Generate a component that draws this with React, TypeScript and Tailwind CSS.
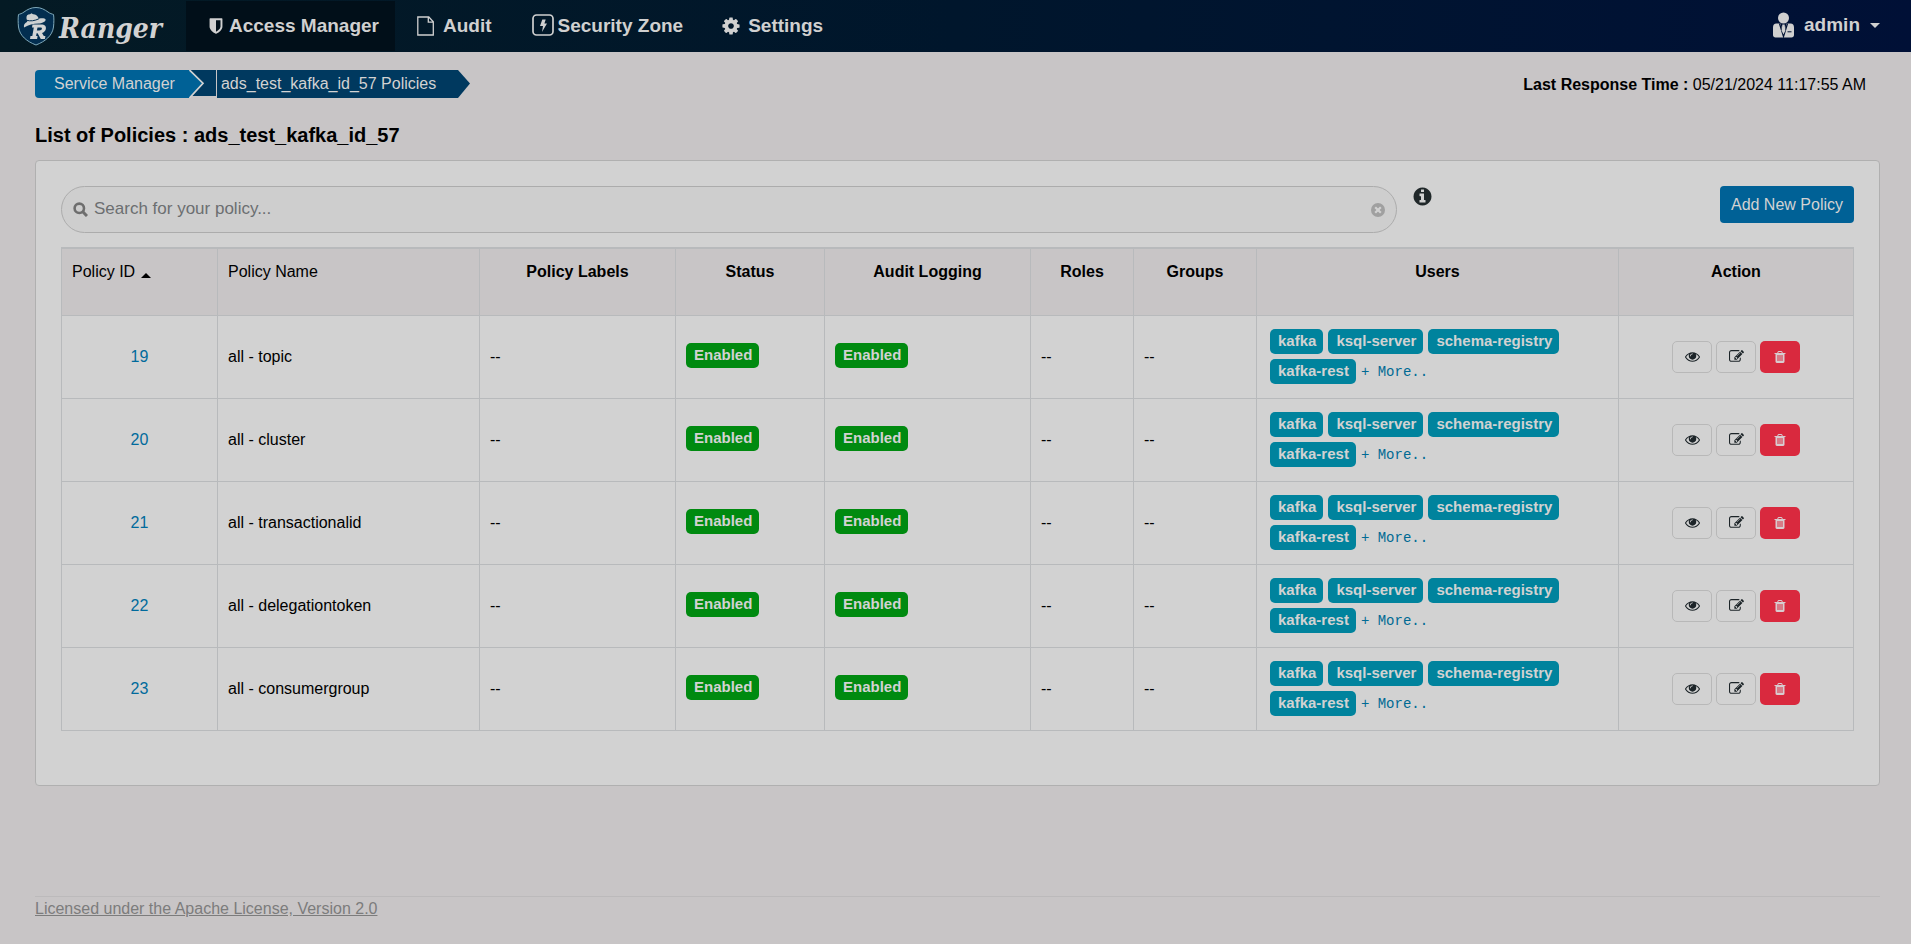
import React from "react";

const PATHS = {
  shield:
    "M1344 960V320H896v1137q119-63 213-137 235-184 235-360zm192-768v768q0 86-33.5 170.5t-83 150-118 127.5-126.5 103-121 77.5-89.5 49.5-42.5 20q-12 6-26 6t-26-6q-16-7-42.5-20t-89.5-49.5-121-77.5-126.5-103-118-127.5-83-150T256 960V192q0-26 19-45t45-19h1152q26 0 45 19t19 45z",
  eye: "M1664 960q-152-236-381-353 61 104 61 225 0 185-131.5 316.5t-316.5 131.5-316.5-131.5-131.5-316.5q0-121 61-225-229 117-381 353 133 205 333.5 326.5t434.5 121.5 434.5-121.5 333.5-326.5zm-720-384q0-20-14-34t-34-14q-125 0-214.5 89.5t-89.5 214.5q0 20 14 34t34 14 34-14 14-34q0-86 61-147t147-61q20 0 34-14t14-34zm848 384q0 34-20 69-140 230-376.5 368.5t-499.5 138.5-499.5-139-376.5-368q-20-35-20-69t20-69q140-229 376.5-368t499.5-139 499.5 139 376.5 368q20 35 20 69z",
  edit: "M888 1184l116-116-152-152-116 116v56h96v96h56zm440-720q-16-16-33 1l-350 350q-17 17-1 33t33-1l350-350q17-17 1-33zm80 594v190q0 119-84.5 203.5t-203.5 84.5h-832q-119 0-203.5-84.5t-84.5-203.5v-832q0-119 84.5-203.5t203.5-84.5h832q63 0 117 25 15 7 18 23 3 17-9 29l-49 49q-14 14-32 8-23-6-45-6h-832q-66 0-113 47t-47 113v832q0 66 47 113t113 47h832q66 0 113-47t47-113v-126q0-13 9-22l64-64q15-15 35-7t20 29zm-96-738l288 288-672 672h-288v-288zm444 132l-92 92-288-288 92-92q28-28 68-28t68 28l152 152q28 28 28 68t-28 68z",
  trash:
    "M704 1376v-704q0-14-9-23t-23-9h-64q-14 0-23 9t-9 23v704q0 14 9 23t23 9h64q14 0 23-9t9-23zm256 0v-704q0-14-9-23t-23-9h-64q-14 0-23 9t-9 23v704q0 14 9 23t23 9h64q14 0 23-9t9-23zm256 0v-704q0-14-9-23t-23-9h-64q-14 0-23 9t-9 23v704q0 14 9 23t23 9h64q14 0 23-9t9-23zm-544-992h448l-48-117q-7-9-17-11h-317q-10 2-17 11zm928 32v64q0 14-9 23t-23 9h-96v948q0 83-47 143.5t-113 60.5h-832q-66 0-113-58.5t-47-141.5v-952h-96q-14 0-23-9t-9-23v-64q0-14 9-23t23-9h309l70-167q15-37 54-63t79-26h320q40 0 79 26t54 63l70 167h309q14 0 23 9t9 23z",
  cog: "M1152 896q0-106-75-181t-181-75-181 75-75 181 75 181 181 75 181-75 75-181zm512-109v222q0 12-8 23t-20 13l-185 28q-19 54-39 91 35 50 107 138 10 12 10 25t-9 23q-27 37-99 108t-94 71q-12 0-26-9l-138-108q-44 23-91 38-16 136-29 186-7 28-36 28h-222q-14 0-24.5-8.5t-11.5-21.5l-28-184q-49-16-90-37l-141 107q-10 9-25 9-14 0-25-11-126-114-165-168-7-10-7-23 0-12 8-23 15-21 51-66.5t54-70.5q-27-50-41-99l-183-27q-13-2-21-12.5t-8-23.5v-222q0-12 8-23t19-13l186-28q14-46 39-92-40-57-107-138-10-12-10-24 0-10 9-23 26-36 98.5-107.5t94.5-71.5q13 0 26 10l138 107q44-23 91-38 16-136 29-186 7-28 36-28h222q14 0 24.5 8.5t11.5 21.5l28 184q49 16 90 37l142-107q9-9 24-9 13 0 25 10 129 119 165 170 7 8 7 22 0 12-8 23-15 21-51 66.5t-54 70.5q26 50 41 98l183 28q13 2 21 12.5t8 23.5z",
  info: "M1152 1376v-160q0-14-9-23t-23-9h-96v-512q0-14-9-23t-23-9h-320q-14 0-23 9t-9 23v160q0 14 9 23t23 9h96v320h-96q-14 0-23 9t-9 23v160q0 14 9 23t23 9h448q14 0 23-9t9-23zm-128-896v-160q0-14-9-23t-23-9h-192q-14 0-23 9t-9 23v160q0 14 9 23t23 9h192q14 0 23-9t9-23zm640 416q0 209-103 385.5t-279.5 279.5-385.5 103-385.5-103-279.5-279.5-103-385.5 103-385.5 279.5-279.5 385.5-103 385.5 103 279.5 279.5 103 385.5z",
};

function Icon({ name, className }: { name: keyof typeof PATHS; className: string }) {
  return (
    <svg viewBox="0 0 1792 1792" fill="currentColor" className={className} aria-hidden="true">
      <path d={PATHS[name]} />
    </svg>
  );
}

function Logo() {
  return (
    <a href="#home" className="flex w-[186px] items-center gap-1 pl-[17px]" aria-label="Ranger">
      <svg width="38" height="40" viewBox="0 0 38 40" aria-hidden="true">
        <path
          d="M19 1.500c5 0 8.500 2 12 4.500 2 1.500 4 2 5.500 2.500.5 3 .5 8 0 12.500-1.200 9-8.500 14.500-17.500 18C10 35.500 2.700 30 1.500 21 1 16.500 1 11.500 1.500 8.500 3 8 5 7.500 7 6c3.500-2.500 7-4.500 12-4.500z"
          fill="#032e50"
          stroke="#7fa9ba"
          strokeWidth="1"
        />
        <path
          d="M9.500 12.500C9 9.500 10.500 8.300 13 8.200l1.500-1 1.500 1c2-.2 4 .9 5 2.900l.7 1.600c3-.5 5.800-.6 6.800.5.7 1.900-1.900 3.500-6 4.200-6-.1-10.500 1-15.500 4 -.4-2.500.3-4 3.300-5.600z"
          fill="#cdd1d2"
        />
        <path d="M9.300 14.200c4 1.300 8.500.6 12.600-1.400" fill="none" stroke="#032e50" strokeWidth="1" />
        <path
          d="M15.500 18.500h8.500c4 0 5.500 2 4.800 4.700-.5 1.900-1.900 3.200-3.800 3.700l1.800 3.200h1.600l-.5 2.900h-4.100l-3.200-5.800h-1l-.5 2.900h1.500l-.5 2.900H13l.5-2.900h1.800l1.500-8.700h-1.800zm5 2.900l-.6 3.100h2.300c1.500 0 2.500-.4 2.700-1.700.2-1-.4-1.400-1.600-1.400z"
          fill="#d2d4d4"
        />
      </svg>
      <span className="pt-[6px] font-['DejaVu_Serif_Condensed','DejaVu_Serif',serif] text-[28px] leading-9 font-bold italic text-[#d2d2d2]">
        Ranger
      </span>
    </a>
  );
}

function Header() {
  return (
    <header className="flex h-[52px] items-stretch bg-linear-to-r from-[#041a24] via-[#00162c] to-[#001036] text-[19px] font-bold text-[#d0d0d0]">
      <Logo />
      <nav className="flex items-stretch">
        <a href="#access" className="my-px flex items-center gap-1 bg-[#010f19] pr-4 pl-[21px]">
          <Icon name="shield" className="size-[18px]" />
          Access Manager
        </a>
        <a href="#audit" className="flex items-center gap-[9px] pr-5 pl-[22px]">
          <svg width="17" height="20" viewBox="0 0 17 20" fill="none" stroke="currentColor" strokeWidth="1.300" aria-hidden="true">
            <path d="M.8 1h11l4.500 4.800V19H.8zM11.300 1v5.200h5" />
          </svg>
          Audit
        </a>
        <a href="#zone" className="flex items-center gap-1 px-5 pb-[2px]">
          <svg width="22" height="22" viewBox="0 0 22 22" aria-hidden="true">
            <rect x="1" y="1" width="20" height="20" rx="3.500" fill="none" stroke="currentColor" strokeWidth="1.700" />
            <path d="M10.300 5.500h3.400l-1.300 4h2.600l-5 8.500 1-6H8z" fill="currentColor" />
          </svg>
          <span className="pt-[2px]">Security Zone</span>
        </a>
        <a href="#settings" className="flex items-center gap-[7px] pl-[18px]">
          <Icon name="cog" className="size-5" />
          Settings
        </a>
      </nav>
      <button type="button" className="mr-[31px] ml-auto flex items-center gap-[10px] pb-[2px]">
        <svg width="21" height="26" viewBox="0 0 21 26" fill="currentColor" aria-hidden="true">
          <circle cx="10.500" cy="6" r="5.500" />
          <path d="M3.500 11.500h4l3 12 3-12h4c2.300 0 3.500 1.500 3.500 4V23c0 1.500-1 2.500-2.500 2.500h-16C1 25.500 0 24.500 0 23v-7.500c0-2.500 1.200-4 3.500-4z" />
          <path d="M6.500 11.500l4 13 4-13" fill="none" stroke="#001233" strokeWidth="1.300" />
          <path d="M9.400 12.500h2.200l.8 6-1.900 4-1.900-4z" />
          <path d="M14.500 19.800h4" stroke="#001233" strokeWidth="1" />
        </svg>
        admin
        <svg width="10" height="5" viewBox="0 0 10 5" fill="currentColor" aria-hidden="true">
          <path d="M0 0h10L5 5z" />
        </svg>
      </button>
    </header>
  );
}

function Breadcrumb() {
  return (
    <nav aria-label="Breadcrumb" className="flex h-7 items-stretch text-base text-[#d2d2d2]">
      <a href="#services" className="flex items-center rounded-l bg-[#006196] pr-[14px] pl-[19px]">
        Service Manager
      </a>
      <svg width="27" height="28" viewBox="0 0 27 28" aria-hidden="true">
        <path d="M0 0h27v26H0z" fill="#00395f" />
        <path d="M0 26h2l-2 2z" fill="#c8c5c6" />
        <path d="M0 0l14 13L0 28z" fill="#006196" />
        <path d="M.5 0l13.500 13.200L.5 28" fill="none" stroke="#d2d2d2" strokeWidth="1.700" />
      </svg>
      <span className="ml-px flex items-center bg-[#00395f] pr-[22px] pl-1">ads_test_kafka_id_57 Policies</span>
      <svg width="12" height="28" viewBox="0 0 12 28" aria-hidden="true">
        <path d="M0 0l12 13.500L0 28z" fill="#00395f" />
      </svg>
    </nav>
  );
}

const COLUMNS = [
  { label: "Policy Labels", width: "w-[196px]" },
  { label: "Status", width: "w-[149px]" },
  { label: "Audit Logging", width: "w-[206px]" },
  { label: "Roles", width: "w-[103px]" },
  { label: "Groups", width: "w-[123px]" },
  { label: "Users", width: "w-[362px]" },
  { label: "Action", width: "w-[235px]" },
];

const POLICIES = [
  { id: 19, name: "all - topic" },
  { id: 20, name: "all - cluster" },
  { id: 21, name: "all - transactionalid" },
  { id: 22, name: "all - delegationtoken" },
  { id: 23, name: "all - consumergroup" },
];

const USERS = ["kafka", "ksql-server", "schema-registry", "kafka-rest"];

const CELL = "border border-[#b8babc] px-[10px]";
const HEAD = "border border-[#b8babc] px-[10px] pt-[11px] align-top";

function Badge({ children, tone }: { children: React.ReactNode; tone: "green" | "teal" }) {
  const color = tone === "green" ? "bg-[#008a10]" : "bg-[#00839d]";
  return (
    <span className={`flex h-[25px] items-center rounded-[5px] pr-[7px] pl-2 text-[15px] font-bold text-[#d2d2d2] ${color}`}>
      {children}
    </span>
  );
}

function PolicyTable() {
  return (
    <table className="mt-[14px] w-full table-fixed border-collapse border-t-2 border-[#b8babc] text-base text-black">
      <thead>
        <tr className="h-[67px] bg-[#c8c5c6]">
          <th className={`${HEAD} w-[156px] text-left font-normal`}>
            <button type="button" className="flex items-center gap-[6px]">
              Policy ID
              <svg width="10" height="5" viewBox="0 0 10 5" className="mt-[6px]" aria-hidden="true">
                <path d="M5 0l5 5H0z" />
              </svg>
            </button>
          </th>
          <th className={`${HEAD} w-[262px] text-left font-normal`}>Policy Name</th>
          {COLUMNS.map((c) => (
            <th key={c.label} className={`${HEAD} ${c.width} text-center font-bold`}>
              {c.label}
            </th>
          ))}
        </tr>
      </thead>
      <tbody>
        {POLICIES.map((p) => (
          <tr key={p.id} className="h-[83px]">
            <td className={`${CELL} text-center`}>
              <a href={`#policy-${p.id}`} className="text-[#006a9c]">
                {p.id}
              </a>
            </td>
            <td className={CELL}>{p.name}</td>
            <td className={CELL}>--</td>
            <td className={`${CELL} pb-[2px]`}>
              <div className="flex">
                <Badge tone="green">Enabled</Badge>
              </div>
            </td>
            <td className={`${CELL} pb-[2px]`}>
              <div className="flex">
                <Badge tone="green">Enabled</Badge>
              </div>
            </td>
            <td className={CELL}>--</td>
            <td className={CELL}>--</td>
            <td className="border border-[#b8babc] px-[13px]">
              <div className="flex flex-wrap items-center gap-[5px]">
                {USERS.map((u) => (
                  <Badge key={u} tone="teal">
                    {u}
                  </Badge>
                ))}
                <a href="#more" className="font-['Liberation_Mono',monospace] text-sm text-[#006a94]">
                  + More..
                </a>
              </div>
            </td>
            <td className={CELL}>
              <div className="flex justify-center gap-1">
                <button type="button" aria-label="View" className="flex h-8 w-10 items-center justify-center rounded-[5px] border border-[#b8b8b8] text-[#1c2428]">
                  <Icon name="eye" className="size-[15px]" />
                </button>
                <button type="button" aria-label="Edit" className="flex h-8 w-10 items-center justify-center rounded-[5px] border border-[#b8b8b8] text-[#1c2428]">
                  <Icon name="edit" className="size-[15px]" />
                </button>
                <button type="button" aria-label="Delete" className="flex h-8 w-10 items-center justify-center rounded-[5px] bg-[#d9293e] text-[#d8ccd0]">
                  <Icon name="trash" className="size-[14px]" />
                </button>
              </div>
            </td>
          </tr>
        ))}
      </tbody>
    </table>
  );
}

export default function App() {
  return (
    <div className="flex min-h-screen flex-col bg-[#c8c5c6] font-['Liberation_Sans',Arial,sans-serif] text-black">
      <Header />
      <main className="pt-[18px] pr-[31px] pl-[35px]">
        <div className="flex items-center justify-between">
          <Breadcrumb />
          <p className="pt-[2px] pr-[14px] text-base">
            <b>Last Response Time :</b> 05/21/2024 11:17:55 AM
          </p>
        </div>
        <h1 className="mt-[23px] text-xl leading-7 font-bold">List of Policies : ads_test_kafka_id_57</h1>
        <section className="mt-[11px] rounded border border-[#b0b0b0] bg-[#d2d2d2] px-[25px] pt-[25px] pb-[54px]">
          <div className="flex items-start">
            <div className="mr-[15px] flex h-[47px] w-[74.5%] items-center gap-[6px] rounded-full border border-[#acacac] bg-[#cecece] pr-[11px] pl-[11px]">
              <svg width="15" height="15" viewBox="0 0 15 15" fill="none" stroke="#6e6e6e" strokeWidth="2.600" aria-hidden="true">
                <circle cx="6.300" cy="6.300" r="4.700" />
                <path d="M9.800 9.800l4.200 4.200" strokeWidth="3" />
              </svg>
              <input
                type="text"
                aria-label="Search for your policy"
                placeholder="Search for your policy..."
                className="min-w-0 flex-1 bg-transparent pb-px text-[17px] outline-none placeholder:text-[#6c6f71]"
              />
              <button type="button" aria-label="Clear search">
                <svg width="14" height="14" viewBox="0 0 14 14" aria-hidden="true">
                  <circle cx="7" cy="7" r="7" fill="#a0a0a0" />
                  <path d="M4.200 4.200l5.600 5.600M9.800 4.200l-5.600 5.600" stroke="#d2d2d2" strokeWidth="2.200" />
                </svg>
              </button>
            </div>
            <button type="button" aria-label="Search help" className="text-[#20282a]">
              <Icon name="info" className="size-[21px]" />
            </button>
            <button type="button" className="ml-auto h-[37px] rounded bg-[#006196] px-[11px] text-base text-[#d2d2d2]">
              Add New Policy
            </button>
          </div>
          <PolicyTable />
        </section>
      </main>
      <footer className="mt-auto pr-[31px] pl-[35px]">
        <div className="h-12 border-t border-[#bcbabb]">
          <a href="#license" className="inline-block text-base leading-5 text-[#7c7c7c] underline">
            Licensed under the Apache License, Version 2.0
          </a>
        </div>
      </footer>
    </div>
  );
}
